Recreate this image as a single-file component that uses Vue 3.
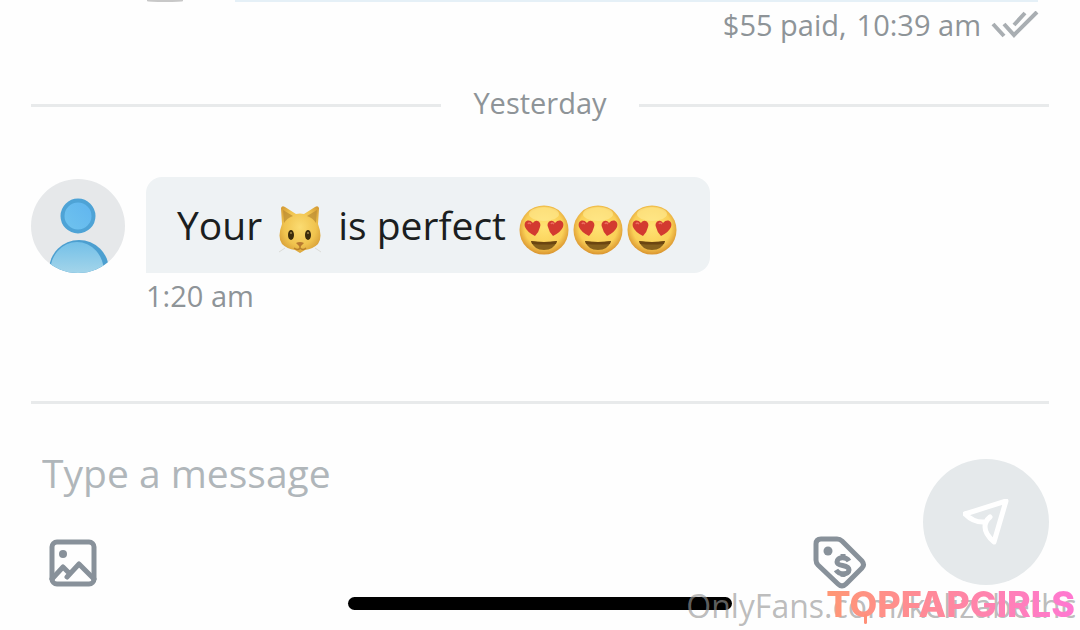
<script setup>
import { ref } from 'vue'

const message = ref('')
const hearts = [1, 2, 3]
</script>

<template>
  <div class="chat">
    <main class="messages">
      <div class="previous" aria-hidden="true">
        <span class="previous-avatar"></span>
        <span class="previous-bubble"></span>
      </div>
      <div class="paid">
        <span>$55 paid,</span>
        <time>10:39 am</time>
        <svg class="checks" viewBox="0 0 48 28" role="img" aria-label="Read">
          <path d="M2 13l11 12M13 13l10 11L46 1M23 14L34 2" />
        </svg>
      </div>
      <div class="day"><span>Yesterday</span></div>
      <div class="row">
        <svg class="avatar" viewBox="0 0 94 94" role="img" aria-label="User avatar">
          <defs>
            <clipPath id="avatar-clip"><circle cx="47" cy="47" r="47" /></clipPath>
            <linearGradient id="body-fill" x1="0" y1="0" x2="0" y2="1">
              <stop offset="0" stop-color="#74c0e8" />
              <stop offset=".55" stop-color="#a6d6ea" />
            </linearGradient>
            <linearGradient id="head-fill" x1="1" y1="0" x2="0" y2="1">
              <stop offset="0" stop-color="#5fb4ef" />
              <stop offset="1" stop-color="#70c4ee" />
            </linearGradient>
          </defs>
          <g clip-path="url(#avatar-clip)">
            <rect width="94" height="94" fill="#e6e8ea" />
            <circle cx="47" cy="37" r="15.5" fill="url(#head-fill)" stroke="#4ea3d6" stroke-width="4" />
            <circle cx="48" cy="91" r="30" fill="#4c9fd0" />
            <ellipse cx="46" cy="93" rx="27" ry="30" fill="url(#body-fill)" />
          </g>
        </svg>
        <div class="content">
          <p class="bubble">
            <span>Your</span>
            <svg class="cat" viewBox="0 0 44 50" role="img" aria-label="Cat face">
              <defs>
                <radialGradient id="cat-fill" cx=".5" cy=".45" r=".6">
                  <stop offset="0" stop-color="#fbdc72" />
                  <stop offset=".65" stop-color="#f0c34e" />
                  <stop offset="1" stop-color="#d59c36" />
                </radialGradient>
              </defs>
              <path d="M3 4Q4 1 7 3L18 10Q22 9 26 10L37 3Q40 1 41 4L40 20Q45 33 40 40Q35 45 27 46L22 49L17 46Q9 45 4 40Q-1 33 4 20Z" fill="url(#cat-fill)" />
              <path d="M5 6L15 12Q9 14 6 19ZM39 6L29 12Q35 14 38 19Z" fill="#b98a32" opacity=".7" />
              <ellipse cx="13" cy="31" rx="3" ry="5" fill="#3b2c0c" />
              <ellipse cx="30" cy="31" rx="3" ry="5" fill="#3b2c0c" />
              <circle cx="13" cy="29" r="1" fill="#a08448" />
              <circle cx="30" cy="29" r="1" fill="#a08448" />
              <path d="M18 39Q22 37 26 39L22 43Z" fill="#b87931" />
              <path d="M22 42v2M16 44Q20 47 22 44Q25 47 28 44" fill="none" stroke="#b9802b" stroke-width="1.5" />
              <path d="M7 44L1 48M37 44L43 48" stroke="#dcdcd8" stroke-width="1" />
            </svg>
            <span>is perfect</span>
            <span class="faces">
              <svg v-for="n in hearts" :key="n" viewBox="0 0 50 50" role="img" aria-label="Smiling face with heart eyes">
                <defs>
                  <radialGradient :id="'face-' + n" cx=".5" cy=".45" r=".56">
                    <stop offset="0" stop-color="#ffe273" />
                    <stop offset=".7" stop-color="#fad057" />
                    <stop offset="1" stop-color="#d8912c" />
                  </radialGradient>
                </defs>
                <circle cx="25" cy="25" r="24.5" :fill="'url(#face-' + n + ')'" />
                <ellipse cx="25" cy="9" rx="15" ry="7" fill="#fff0a0" opacity=".5" />
                <path d="M16 31Q8 27 6 22C4 16 10 13 14 18C17 13 23 17 21 22Q20 27 16 31Z" fill="#d33a30" />
                <path d="M34 31Q30 27 29 22C27 17 33 13 36 18C40 13 46 16 44 22Q42 27 34 31Z" fill="#d33a30" />
                <path d="M9 19Q10 17 12 19M32 19Q33 17 35 19" fill="none" stroke="#ec6d60" stroke-width="1.5" />
                <path d="M12 36Q25 38 38 36Q35 45 25 45Q15 45 12 36Z" fill="#85601d" />
                <path d="M12 36Q25 38 38 36L37 39Q25 40 13 39Z" fill="#6b4510" />
              </svg>
            </span>
          </p>
          <time class="sent">1:20 am</time>
        </div>
      </div>
    </main>

    <form class="composer" @submit.prevent>
      <div class="entry">
        <input v-model="message" type="text" aria-label="Message" placeholder="Type a message" />
        <div class="tools">
          <button type="button" aria-label="Add image">
            <svg class="picture" viewBox="0 0 48 48">
              <rect x="3" y="3" width="42" height="42" rx="5" />
              <path d="M3 40L14 28L20 34M18 38L30 25L45 40" stroke-linecap="round" />
              <circle cx="14" cy="15" r="4" />
            </svg>
          </button>
          <button type="button" aria-label="Set message price">
            <svg class="tag" viewBox="0 0 54 54">
              <path d="M8 3H24Q27 3 29 5L49 25Q52 29 49 32L33 48Q29 52 25 48L5 29Q3 27 3 24V8Q3 3 8 3Z" />
              <circle cx="15" cy="15" r="4.5" />
              <path class="dollar" d="M36 25C33 20 24 21 24 26C24 31 36 28 36 34C36 39 26 39 23 34M30 18V23M30 37V41" />
            </svg>
          </button>
        </div>
      </div>
      <button class="send" type="submit" aria-label="Send message">
        <svg viewBox="0 0 46 46">
          <path d="M2 15L43 2L31 43Q22 35 22 28Q22 22 27 18M2 15Q11 24 22 23" />
        </svg>
      </button>
    </form>

    <div class="home-bar" aria-hidden="true"></div>
    <div class="account-mark">OnlyFans.com/kelizabethc</div>
    <div class="site-mark">TOPFAPGIRLS</div>
  </div>
</template>

<style>
body {
  margin: 0;
  background: #fefefe;
}
</style>

<style scoped>
* {
  box-sizing: border-box;
}
.chat {
  position: relative;
  min-height: 100vh;
  display: flex;
  flex-direction: column;
  overflow: hidden;
  color: #8e9498;
  font: 29px/40px "Open Sans", "Noto Sans", sans-serif;
}
button {
  display: flex;
  padding: 0;
  border: 0;
  background: none;
  cursor: pointer;
}
svg {
  display: block;
  flex: none;
}
.messages {
  padding: 0 31px;
}
.previous {
  height: 2px;
  display: flex;
  gap: 52px;
  padding: 0 11px 0 116px;
}
.previous-avatar {
  width: 36px;
  border-radius: 0 0 50% 50%;
  background: #c8c8c8;
}
.previous-bubble {
  flex: 1;
  background: #e5f0f7;
}
.paid {
  display: flex;
  justify-content: flex-end;
  align-items: center;
  gap: 10px;
  padding: 3px 10px 0 0;
}
.checks {
  width: 48px;
  height: 28px;
  fill: none;
  stroke: #a9aeb2;
  stroke-width: 4;
}
.day {
  display: flex;
  align-items: center;
  gap: 32px;
  margin-top: 38px;
}
.day::before,
.day::after {
  content: "";
  flex: 1;
  height: 3px;
  margin-top: 4px;
  background: #e8eaeb;
}
.row {
  display: flex;
  gap: 21px;
  margin-top: 54px;
}
.avatar {
  width: 94px;
  height: 94px;
  margin-top: 2px;
}
.bubble {
  display: flex;
  align-items: center;
  width: fit-content;
  height: 96px;
  margin: 0;
  padding: 0 33px 0 31px;
  border-radius: 16px 16px 16px 0;
  background: #eef2f4;
  color: #1b1e20;
  font-size: 39px;
  line-height: 56px;
}
.cat {
  width: 44px;
  height: 50px;
  margin: 8px 16px 0;
}
.faces {
  display: flex;
  gap: 4px;
  margin: 10px 0 0 13px;
}
.faces svg {
  width: 50px;
  height: 50px;
}
.sent {
  display: block;
  margin-top: 3px;
}
.composer {
  display: flex;
  align-items: flex-end;
  gap: 56px;
  margin: 85px 31px 0;
  padding-top: 36px;
  border-top: 3px solid #e8eaeb;
}
.entry {
  flex: 1;
  min-width: 0;
}
input {
  display: block;
  width: 100%;
  height: 64px;
  padding: 0 11px;
  border: 0;
  outline: 0;
  background: transparent;
  color: #1b1e20;
  font: inherit;
  font-size: 39px;
}
input::placeholder {
  color: #b0b6ba;
  opacity: 1;
}
.tools {
  display: flex;
  justify-content: space-between;
  align-items: center;
  padding: 32px 0 0 18px;
}
.tools svg {
  fill: none;
  stroke: #88919a;
  stroke-width: 5;
  stroke-linejoin: round;
}
.tools circle {
  fill: #88919a;
  stroke: none;
}
.picture {
  width: 48px;
  height: 48px;
}
.tag {
  width: 54px;
  height: 54px;
}
.tools .dollar {
  stroke-width: 5;
}
.send {
  flex: none;
  align-items: center;
  justify-content: center;
  width: 126px;
  height: 126px;
  margin-bottom: 5px;
  border-radius: 50%;
  background: #e5e9eb;
}
.send svg {
  width: 46px;
  height: 46px;
  fill: none;
  stroke: #fff;
  stroke-width: 5;
  stroke-linejoin: round;
  stroke-linecap: round;
}
.home-bar {
  position: absolute;
  bottom: 20px;
  left: 50%;
  width: 384px;
  height: 13px;
  border-radius: 7px;
  background: #000;
  transform: translateX(-50%);
}
.account-mark,
.site-mark {
  position: absolute;
  white-space: nowrap;
}
.account-mark {
  right: 4px;
  bottom: 4px;
  color: rgba(150, 150, 150, 0.65);
  font-size: 32px;
}
.site-mark {
  right: 5px;
  bottom: 6px;
  background: linear-gradient(90deg, #ff9774, #ff87a0 50%, #ff78d2);
  background-clip: text;
  color: transparent;
  font: 800 36px/40px Inter, sans-serif;
}
.site-mark::after {
  content: "";
  position: absolute;
  left: 38px;
  bottom: 0;
  width: 3px;
  height: 10px;
  border-radius: 2px;
  background: #ff9078;
}
</style>
